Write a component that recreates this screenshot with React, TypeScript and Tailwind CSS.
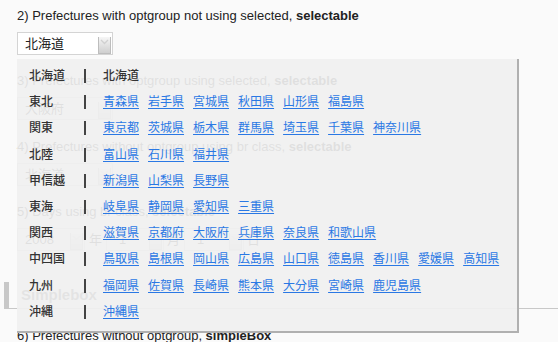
import React from "react";

const groups: { label: string; items: string[]; selected?: boolean }[] = [
  { label: "北海道", items: ["北海道"], selected: true },
  { label: "東北", items: ["青森県", "岩手県", "宮城県", "秋田県", "山形県", "福島県"] },
  { label: "関東", items: ["東京都", "茨城県", "栃木県", "群馬県", "埼玉県", "千葉県", "神奈川県"] },
  { label: "北陸", items: ["富山県", "石川県", "福井県"] },
  { label: "甲信越", items: ["新潟県", "山梨県", "長野県"] },
  { label: "東海", items: ["岐阜県", "静岡県", "愛知県", "三重県"] },
  { label: "関西", items: ["滋賀県", "京都府", "大阪府", "兵庫県", "奈良県", "和歌山県"] },
  { label: "中四国", items: ["鳥取県", "島根県", "岡山県", "広島県", "山口県", "徳島県", "香川県", "愛媛県", "高知県"] },
  { label: "九州", items: ["福岡県", "佐賀県", "長崎県", "熊本県", "大分県", "宮崎県", "鹿児島県"] },
  { label: "沖縄", items: ["沖縄県"] },
];

function Arrow() {
  return (
    <div className="w-[13px] h-[17px] self-end border-l border-r border-b border-[#bdbdbd] bg-gradient-to-b from-[#f6f6f6] to-[#cfcfcf] flex justify-center pt-[2px]">
      <svg width="9" height="6" viewBox="0 0 9 6">
        <path d="M1 1 L4.5 4.5 L8 1" fill="none" stroke="#d0d0d0" strokeWidth="1.3" />
      </svg>
    </div>
  );
}

function Select({ text, w, pl = 7 }: { text: string; w: string; pl?: number }) {
  return (
    <div className={`flex h-[23px] ${w} bg-white border border-[#d4d4d4] pr-[1px]`}>
      <div className={`flex-1 flex items-center text-[13px] text-[#222] ${pl === 7 ? "pl-[7px]" : "pl-[12px]"}`}>{text}</div>
      <Arrow />
    </div>
  );
}

const jp = { fontFamily: '"Liberation Sans", "Noto Sans CJK JP", Arial, sans-serif' };

export default function App() {
  return (
    <div className="relative w-[558px] h-[342px] overflow-hidden bg-[#fafafa] text-[#222]" style={jp}>
      <div className="pl-[17px] pt-[8px]">
        <p className="h-[16px] leading-[16px] text-[13px]">
          2) Prefectures with optgroup not using selected, <b>selectable</b>
        </p>
        <div className="mt-[8px]">
          <Select text="北海道" w="w-[96px]" />
        </div>
        <p className="mt-[18px] h-[16px] leading-[16px] text-[13px]">
          3) Prefectures with optgroup using selected, <b>selectable</b>
        </p>
        <div className="mt-[8px]">
          <Select text="大阪府" w="w-[96px]" />
        </div>
        <p className="mt-[19px] h-[16px] leading-[16px] text-[13px]">
          4) Prefectures without optgroup using br class, <b>selectable</b>
        </p>
        <div className="mt-[8px]">
          <Select text="北海道" w="w-[96px]" />
        </div>
        <p className="mt-[18px] h-[16px] leading-[16px] text-[13px]">
          5) Days using br class, <b>selectable</b>
        </p>
        <div className="mt-[8px] flex items-center text-[13px]">
          <Select text="2008" w="w-[68px]" />
          <span className="ml-[4px] mr-[4px]">年</span>
          <Select text="1" w="w-[58px]" pl={12} />
          <span className="ml-[3px] mr-[4px]">月</span>
          <Select text="1" w="w-[60px]" pl={12} />
          <span className="ml-[3px]">日</span>
        </div>
        <div className="mt-[31px] -ml-[13px] h-[27px] border-l-[5px] border-b border-[#c8c8c8] flex items-center pl-[12px]">
          <span className="text-[15px] font-bold text-[#555]">Simplebox</span>
        </div>
        <p className="mt-[19px] h-[16px] leading-[16px] text-[13px]">
          6) Prefectures without optgroup, <b>simpleBox</b>
        </p>
      </div>

      <div className="absolute left-[17px] top-[59px] w-[502px] h-[274px] bg-[#f0f0f0]/[0.92] border-r-2 border-b-2 border-[#b0b0b0] pt-[4px]">
        {groups.map((g) => (
          <div key={g.label} className="flex items-center h-[26.2px] pl-[12px] text-[12px]">
            <div className="w-[55px] text-[#333] font-medium">{g.label}</div>
            <div className="w-[2px] h-[14px] bg-[#444]" />
            <div className="ml-[17px] flex gap-[9px]">
              {g.items.map((it) =>
                g.selected ? (
                  <span key={it} className="text-[#333] font-medium">{it}</span>
                ) : (
                  <a key={it} href="#" className="text-[#2a78e4] underline underline-offset-2">
                    {it}
                  </a>
                )
              )}
            </div>
          </div>
        ))}
      </div>
    </div>
  );
}
